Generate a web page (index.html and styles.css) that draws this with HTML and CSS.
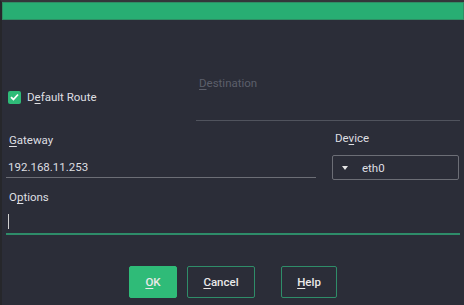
FILE: index.html
```html
<!DOCTYPE html>
<html lang="en">
<head>
  <meta charset="UTF-8">
  <title>Route</title>
  <link rel="stylesheet" href="styles.css">
</head>
<body>
  <div class="titlebar"></div>
  <div class="dialog">
    <div class="row row-dest">
      <label class="check">
        <span class="box">
          <svg width="9" height="8" viewBox="0 0 9 8"><path d="M1 4.2 L3.4 6.5 L8 1.5" fill="none" stroke="#fff" stroke-width="1.8"/></svg>
        </span>
        <span>D<u>e</u>fault Route</span>
      </label>
      <div class="field dest">
        <div class="label disabled"><u>D</u>estination</div>
        <div class="value"></div>
      </div>
    </div>

    <div class="row row-gw">
      <div class="field gateway">
        <div class="label"><u>G</u>ateway</div>
        <div class="value">192.168.11.253</div>
      </div>
      <div class="device">
        <div class="label">De<u>v</u>ice</div>
        <div class="combo">
          <span class="arrow"></span>
          <span>eth0</span>
        </div>
      </div>
    </div>

    <div class="field options">
      <div class="label">O<u>p</u>tions</div>
      <div class="value"><span class="caret"></span></div>
    </div>

    <div class="buttons">
      <button class="btn primary"><u>O</u>K</button>
      <button class="btn cancel"><u>C</u>ancel</button>
      <button class="btn help"><u>H</u>elp</button>
    </div>
  </div>
</body>
</html>
```

FILE: styles.css
```css
* {
  margin: 0;
  padding: 0;
  box-sizing: border-box;
}

body {
  width: 464px;
  height: 305px;
  overflow: hidden;
  font-family: Roboto, "Liberation Sans", sans-serif;
  font-size: 11.5px;
  line-height: 14px;
  color: #dedfe2;
  background: #2b2d38;
  border-left: 2px solid #26272b;
  border-top: 2px solid #34363a;
}

u {
  text-decoration: underline;
  text-underline-offset: 2px;
}

/* Title bar */
.titlebar {
  height: 18px;
  background: #28ae73;
  border: 1px solid #2f8d64;
}

.dialog {
  padding: 0 2px 0 4px;
}

.row {
  display: flex;
}

/* Default route + destination */
.row-dest {
  margin-top: 56px;
  align-items: flex-start;
}
.check {
  width: 190px;
  margin-top: 14px;
  display: flex;
  align-items: center;
  gap: 6px;
  padding-left: 2px;
}
.check .box {
  width: 13px;
  height: 13px;
  border-radius: 2px;
  background: #2fbb78;
  display: flex;
  align-items: center;
  justify-content: center;
}

.field .label {
  padding-left: 3px;
}
.label.disabled {
  color: #5c5f6b;
}
.dest {
  flex: 1;
  margin-right: 2px;
}
.dest .value {
  height: 31px;
  border-bottom: 1px solid #50535d;
}

/* Gateway + device */
.row-gw {
  margin-top: 10px;
}
.gateway {
  width: 310px;
  padding-top: 2px;
}
.gateway .value {
  margin-top: 13px;
  padding: 0 0 3px 2px;
  height: 18px;
  border-bottom: 1px solid #6c6e76;
}
.device {
  margin-left: 16px;
  width: 127px;
}
.device .label {
  padding-left: 3px;
}
.combo {
  margin-top: 10px;
  height: 25px;
  border: 1px solid #6c6e76;
  border-radius: 2px;
  display: flex;
  align-items: center;
  gap: 14px;
  padding-left: 9px;
}
.arrow {
  width: 0;
  height: 0;
  border-left: 3px solid transparent;
  border-right: 3px solid transparent;
  border-top: 4px solid #e6e6e6;
}

/* Options */
.options {
  margin-top: 10px;
  margin-right: 2px;
}
.options .value {
  height: 31px;
  padding: 10px 0 0 2px;
  border-bottom: 2px solid #2e8c69;
}
.caret {
  display: block;
  width: 1px;
  height: 15px;
  background: #d0d0d0;
}

/* Buttons */
.buttons {
  margin-top: 31px;
  display: flex;
  padding-left: 123px;
}
.btn {
  height: 32px;
  font-family: inherit;
  font-size: 11.5px;
  font-weight: 500;
  color: #e9e9e9;
  background: transparent;
  border: 1px solid #2f8d69;
  border-radius: 2px;
}
.btn.primary {
  width: 48px;
  background: #2fbb78;
  border-color: #2fbb78;
}
.btn.cancel {
  width: 68px;
  margin-left: 10px;
}
.btn.help {
  width: 56px;
  margin-left: 26px;
}
```
